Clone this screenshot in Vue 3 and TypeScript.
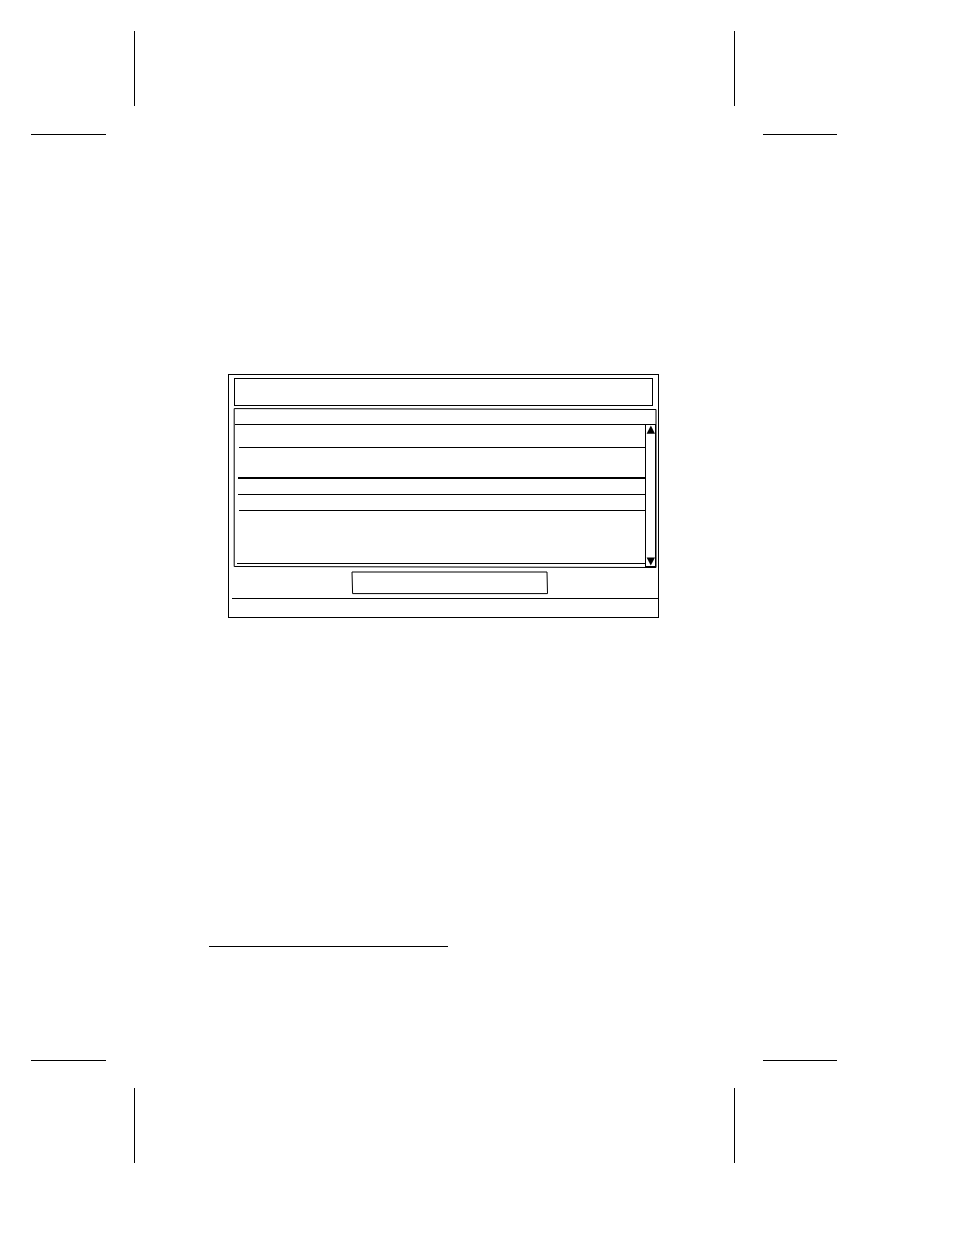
<script setup lang="ts">
import { ref } from 'vue'

interface Row {
  id: number
  kind: string
}

const rows: Row[] = [
  { id: 1, kind: 'heading' },
  { id: 2, kind: 'summary' },
  { id: 3, kind: 'entry' },
  { id: 4, kind: 'entry-last' },
  { id: 5, kind: 'details' },
]

const list = ref<HTMLUListElement | null>(null)

function scroll(amount: number): void {
  list.value?.scrollBy({ top: amount })
}
</script>

<template>
  <div class="page">
    <div class="marks marks-top" aria-hidden="true">
      <i class="v left"></i><i class="v right"></i>
      <i class="h left"></i><i class="h right"></i>
    </div>

    <main class="sheet">
      <section class="window">
        <header class="title"></header>

        <div class="panel">
          <svg class="outline" viewBox="0 0 424 160" preserveAspectRatio="none" aria-hidden="true">
            <polygon points="1.2,0.6 423,1.5 423,159.5 1.2,158.5" />
          </svg>
          <div class="panel-head"></div>
          <div class="panel-body">
            <ul ref="list" class="rows">
              <li v-for="row in rows" :key="row.id" :class="row.kind"></li>
            </ul>
            <div class="scrollbar">
              <button type="button" aria-label="Scroll up" @click="scroll(-16)">
                <svg viewBox="0 0 9 9" aria-hidden="true"><polygon points="4.9,0.6 9,8.7 0.6,8.7" /></svg>
              </button>
              <button type="button" aria-label="Scroll down" @click="scroll(16)">
                <svg viewBox="0 0 9 9" aria-hidden="true"><polygon points="0.6,0.6 9,0.6 4.8,8.6" /></svg>
              </button>
            </div>
          </div>
        </div>

        <div class="actions">
          <button type="button" class="action" aria-label="Action">
            <svg class="outline" viewBox="0 0 197 24" preserveAspectRatio="none" aria-hidden="true">
              <polygon points="1,1 196,1 196.5,22.6 1.6,22.6" />
            </svg>
          </button>
        </div>

        <footer class="status"></footer>
      </section>

      <hr class="note-rule" />
    </main>

    <div class="marks marks-bottom" aria-hidden="true">
      <i class="h left"></i><i class="h right"></i>
      <i class="v left"></i><i class="v right"></i>
    </div>
  </div>
</template>

<style>
body {
  margin: 0;
  background: #fff;
}
</style>

<style scoped>
.page {
  box-sizing: border-box;
  padding: 31px 117px 72px 31px;
  font-family: "Liberation Sans", Arial, sans-serif;
}

/* Crop marks */
.marks {
  display: grid;
  grid-template-columns: 75px 28px 1px 1fr 1px 28px 74px;
}
.marks-top {
  grid-template-rows: 75px 28px 1px;
}
.marks-bottom {
  grid-template-rows: 1px 27px 75px;
}
.marks i {
  background: #000;
}
.v.left {
  grid-column: 3;
}
.v.right {
  grid-column: 5;
}
.h.left {
  grid-column: 1;
}
.h.right {
  grid-column: 7;
}
.marks-top .v,
.marks-bottom .h {
  grid-row: 1;
}
.marks-top .h,
.marks-bottom .v {
  grid-row: 3;
}

.sheet {
  padding: 239px 178px 113px;
}

/* Window */
.window {
  margin-left: 19px;
  border: 1px solid #000;
}
.title {
  box-sizing: border-box;
  height: 28px;
  margin: 3px 5px 2px;
  border: 1px solid #000;
}
.panel {
  position: relative;
  margin: 0 1px 0 4px;
  padding: 0 1px 1px 2px;
}
.outline {
  position: absolute;
  inset: 0;
  width: 100%;
  height: 100%;
  pointer-events: none;
}
.outline polygon {
  fill: none;
  stroke: #000;
  stroke-width: 1px;
  vector-effect: non-scaling-stroke;
}
.panel-head {
  height: 16px;
  border-bottom: 1px solid #000;
}
.panel-body {
  display: flex;
}
.rows {
  flex: 1;
  margin: 0;
  padding: 0 0 3px;
  list-style: none;
}
.rows li {
  height: 15px;
  margin-left: 3px;
  border-bottom: 1px solid #000;
}
.rows .heading {
  height: 22px;
  margin-left: 4px;
}
.rows .summary {
  height: 29px;
  border-bottom-width: 2px;
}
.rows .entry-last {
  margin-left: 4px;
}
.rows .details {
  height: 52px;
  margin-left: 2px;
}
.scrollbar {
  display: flex;
  flex-direction: column;
  justify-content: space-between;
  width: 9px;
  border: solid #000;
  border-width: 0 1px 1px;
}
.scrollbar button {
  display: block;
  width: 9px;
  height: 9px;
  padding: 0;
  border: 0;
  background: none;
}
.scrollbar svg {
  display: block;
  width: 9px;
  height: 9px;
}
.actions {
  display: flex;
  justify-content: center;
  padding: 3px 0 3px 12px;
}
.action {
  position: relative;
  width: 197px;
  height: 24px;
  padding: 0;
  border: 0;
  background: none;
}
.status {
  height: 18px;
  margin-left: 3px;
  border-top: 1px solid #000;
}

.note-rule {
  width: 239px;
  height: 1px;
  margin: 328px 0 0;
  border: 0;
  background: #000;
}
</style>
